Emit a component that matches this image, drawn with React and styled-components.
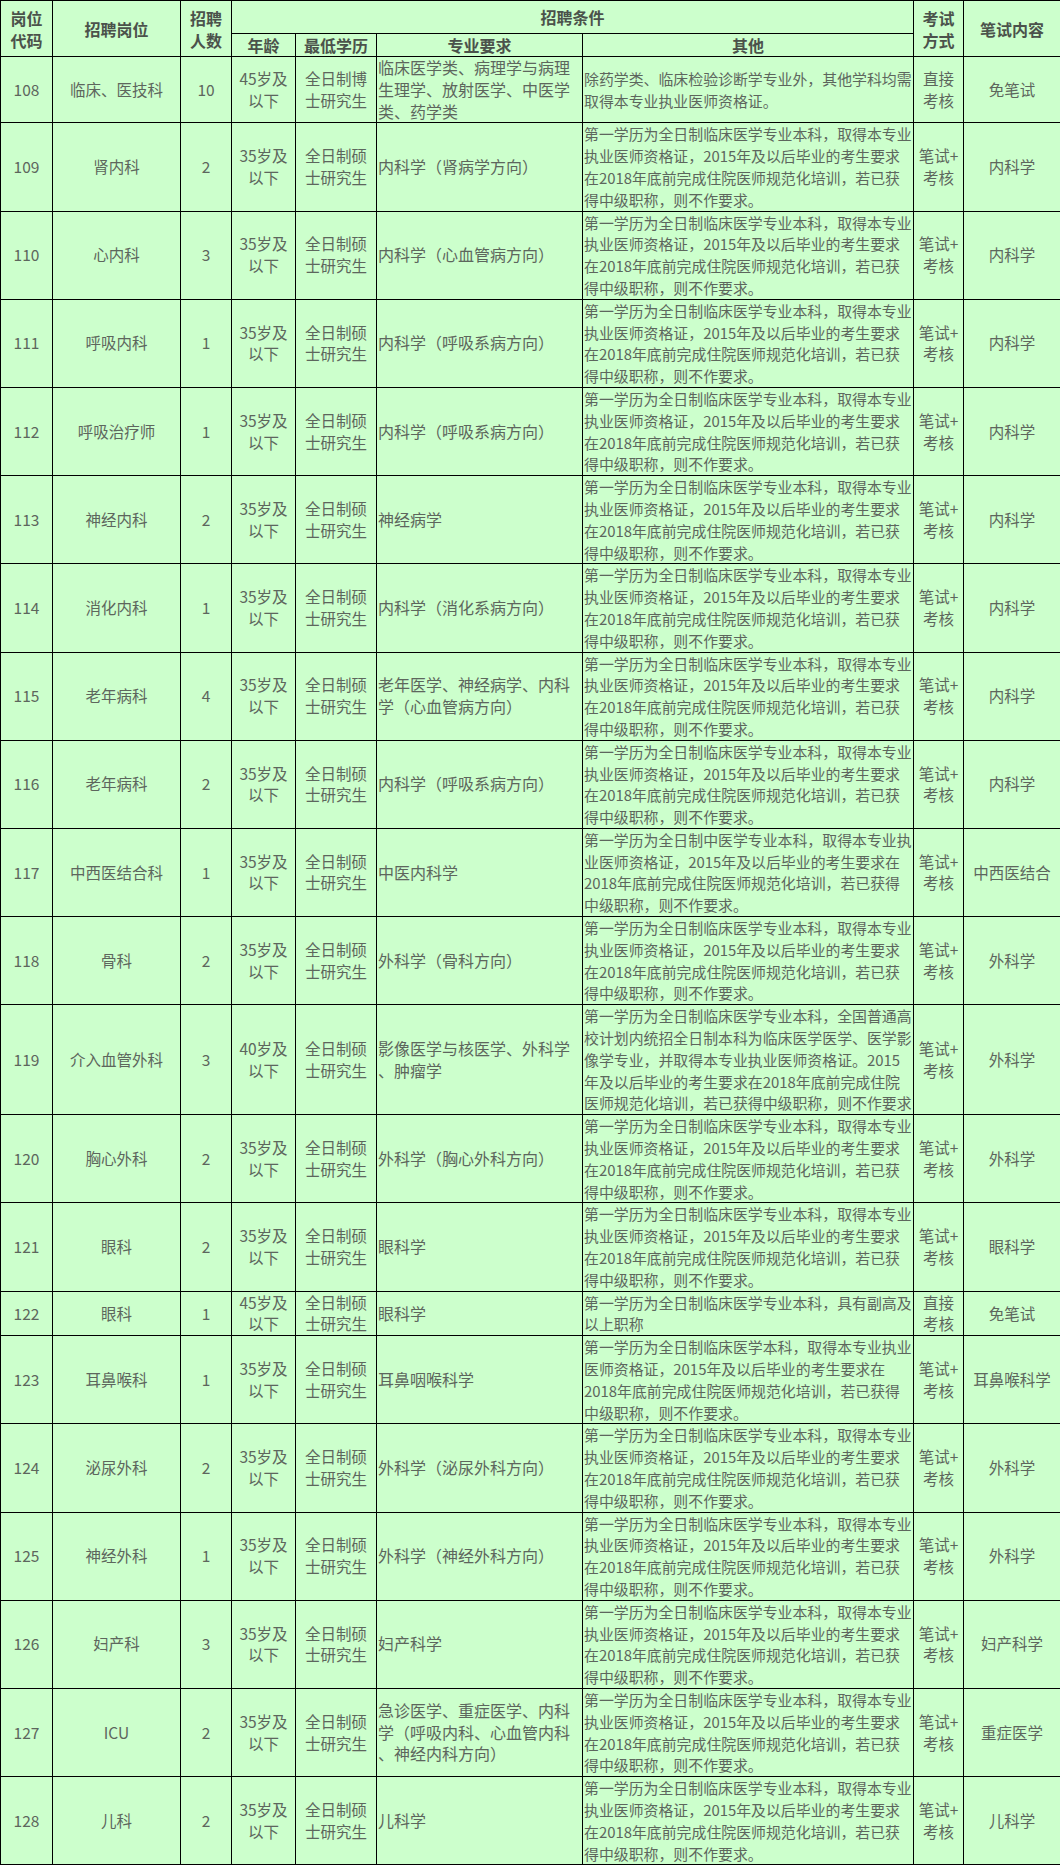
import React from 'react'
import styled, { createGlobalStyle } from 'styled-components'

const GlobalStyle = createGlobalStyle`
  html, body {
    margin: 0;
    padding: 0;
    background: #ffffff;
  }
`

const Table = styled.table`
  width: 1060px;
  table-layout: fixed;
  border-collapse: collapse;
  background: #ccffcc;
  font-family: "Noto Sans CJK SC", "Noto Sans", sans-serif;
  color: #5d665d;
`

const HeadRow = styled.tr`
  height: ${p => p.$h}px;
`

const Th = styled.th`
  border: 1px solid #000;
  padding: 0;
  font-size: 16px;
  font-weight: bold;
  line-height: 22px;
  color: #4b524b;
  text-align: center;
  vertical-align: middle;
`

const Td = styled.td`
  border: 1px solid #000;
  padding: 0 1px;
  font-size: ${p => p.$size || 15.5}px;
  line-height: 21.8px;
  text-align: ${p => (p.$left ? 'left' : 'center')};
  vertical-align: middle;
  white-space: nowrap;
  overflow: hidden;
`

const Line = styled.span`
  display: block;
`

const Lines = ({ value }) =>
  [].concat(value).map((l, i) => <Line key={i}>{l}</Line>)

const STD = [
  '第一学历为全日制临床医学专业本科，取得本专业',
  '执业医师资格证，2015年及以后毕业的考生要求',
  '在2018年底前完成住院医师规范化培训，若已获',
  '得中级职称，则不作要求。',
]

const AGE35 = ['35岁及', '以下']
const AGE45 = ['45岁及', '以下']
const MASTER = ['全日制硕', '士研究生']
const EXAM = ['笔试+', '考核']
const DIRECT = ['直接', '考核']

const rows = [
  {
    code: '108', post: '临床、医技科', num: '10', age: AGE45, edu: ['全日制博', '士研究生'],
    major: ['临床医学类、病理学与病理', '生理学、放射医学、中医学', '类、药学类'],
    other: ['除药学类、临床检验诊断学专业外，其他学科均需', '取得本专业执业医师资格证。'],
    exam: DIRECT, subject: '免笔试',
  },
  { code: '109', post: '肾内科', num: '2', major: '内科学（肾病学方向）', subject: '内科学' },
  { code: '110', post: '心内科', num: '3', major: '内科学（心血管病方向）', subject: '内科学' },
  { code: '111', post: '呼吸内科', num: '1', major: '内科学（呼吸系病方向）', subject: '内科学' },
  { code: '112', post: '呼吸治疗师', num: '1', major: '内科学（呼吸系病方向）', subject: '内科学' },
  { code: '113', post: '神经内科', num: '2', major: '神经病学', subject: '内科学' },
  { code: '114', post: '消化内科', num: '1', major: '内科学（消化系病方向）', subject: '内科学' },
  { code: '115', post: '老年病科', num: '4', major: ['老年医学、神经病学、内科', '学（心血管病方向）'], subject: '内科学' },
  { code: '116', post: '老年病科', num: '2', major: '内科学（呼吸系病方向）', subject: '内科学' },
  {
    code: '117', post: '中西医结合科', num: '1', major: '中医内科学',
    other: [
      '第一学历为全日制中医学专业本科，取得本专业执',
      '业医师资格证，2015年及以后毕业的考生要求在',
      '2018年底前完成住院医师规范化培训，若已获得',
      '中级职称，则不作要求。',
    ],
    subject: '中西医结合',
  },
  { code: '118', post: '骨科', num: '2', major: '外科学（骨科方向）', subject: '外科学' },
  {
    code: '119', post: '介入血管外科', num: '3', age: ['40岁及', '以下'],
    major: ['影像医学与核医学、外科学', '、肿瘤学'],
    other: [
      '第一学历为全日制临床医学专业本科，全国普通高',
      '校计划内统招全日制本科为临床医学医学、医学影',
      '像学专业，并取得本专业执业医师资格证。2015',
      '年及以后毕业的考生要求在2018年底前完成住院',
      '医师规范化培训，若已获得中级职称，则不作要求',
    ],
    subject: '外科学',
  },
  { code: '120', post: '胸心外科', num: '2', major: '外科学（胸心外科方向）', subject: '外科学' },
  { code: '121', post: '眼科', num: '2', major: '眼科学', subject: '眼科学' },
  {
    code: '122', post: '眼科', num: '1', age: AGE45, major: '眼科学',
    other: ['第一学历为全日制临床医学专业本科，具有副高及', '以上职称'],
    exam: DIRECT, subject: '免笔试',
  },
  {
    code: '123', post: '耳鼻喉科', num: '1', major: '耳鼻咽喉科学',
    other: [
      '第一学历为全日制临床医学本科，取得本专业执业',
      '医师资格证，2015年及以后毕业的考生要求在',
      '2018年底前完成住院医师规范化培训，若已获得',
      '中级职称，则不作要求。',
    ],
    subject: '耳鼻喉科学',
  },
  { code: '124', post: '泌尿外科', num: '2', major: '外科学（泌尿外科方向）', subject: '外科学' },
  { code: '125', post: '神经外科', num: '1', major: '外科学（神经外科方向）', subject: '外科学' },
  { code: '126', post: '妇产科', num: '3', major: '妇产科学', subject: '妇产科学' },
  {
    code: '127', post: 'ICU', num: '2',
    major: ['急诊医学、重症医学、内科', '学（呼吸内科、心血管内科', '、神经内科方向）'],
    subject: '重症医学',
  },
  { code: '128', post: '儿科', num: '2', major: '儿科学', subject: '儿科学' },
]

const widths = [52, 128, 51, 64, 81, 206, 331, 50, 97]

const JobRow = ({ row }) => (
  <tr>
    <Td>{row.code}</Td>
    <Td>{row.post}</Td>
    <Td>{row.num}</Td>
    <Td><Lines value={row.age || AGE35} /></Td>
    <Td><Lines value={row.edu || MASTER} /></Td>
    <Td $left $size={16}><Lines value={row.major} /></Td>
    <Td $left $size={14.9}><Lines value={row.other || STD} /></Td>
    <Td><Lines value={row.exam || EXAM} /></Td>
    <Td>{row.subject}</Td>
  </tr>
)

export default function App() {
  return (
    <>
      <GlobalStyle />
      <Table>
        <colgroup>
          {widths.map((w, i) => <col key={i} style={{ width: w }} />)}
        </colgroup>
        <thead>
          <HeadRow $h={33}>
            <Th rowSpan={2}><Lines value={['岗位', '代码']} /></Th>
            <Th rowSpan={2}>招聘岗位</Th>
            <Th rowSpan={2}><Lines value={['招聘', '人数']} /></Th>
            <Th colSpan={4}>招聘条件</Th>
            <Th rowSpan={2}><Lines value={['考试', '方式']} /></Th>
            <Th rowSpan={2}>笔试内容</Th>
          </HeadRow>
          <HeadRow $h={23}>
            <Th>年龄</Th>
            <Th>最低学历</Th>
            <Th>专业要求</Th>
            <Th>其他</Th>
          </HeadRow>
        </thead>
        <tbody>
          {rows.map(r => <JobRow key={r.code} row={r} />)}
        </tbody>
      </Table>
    </>
  )
}
